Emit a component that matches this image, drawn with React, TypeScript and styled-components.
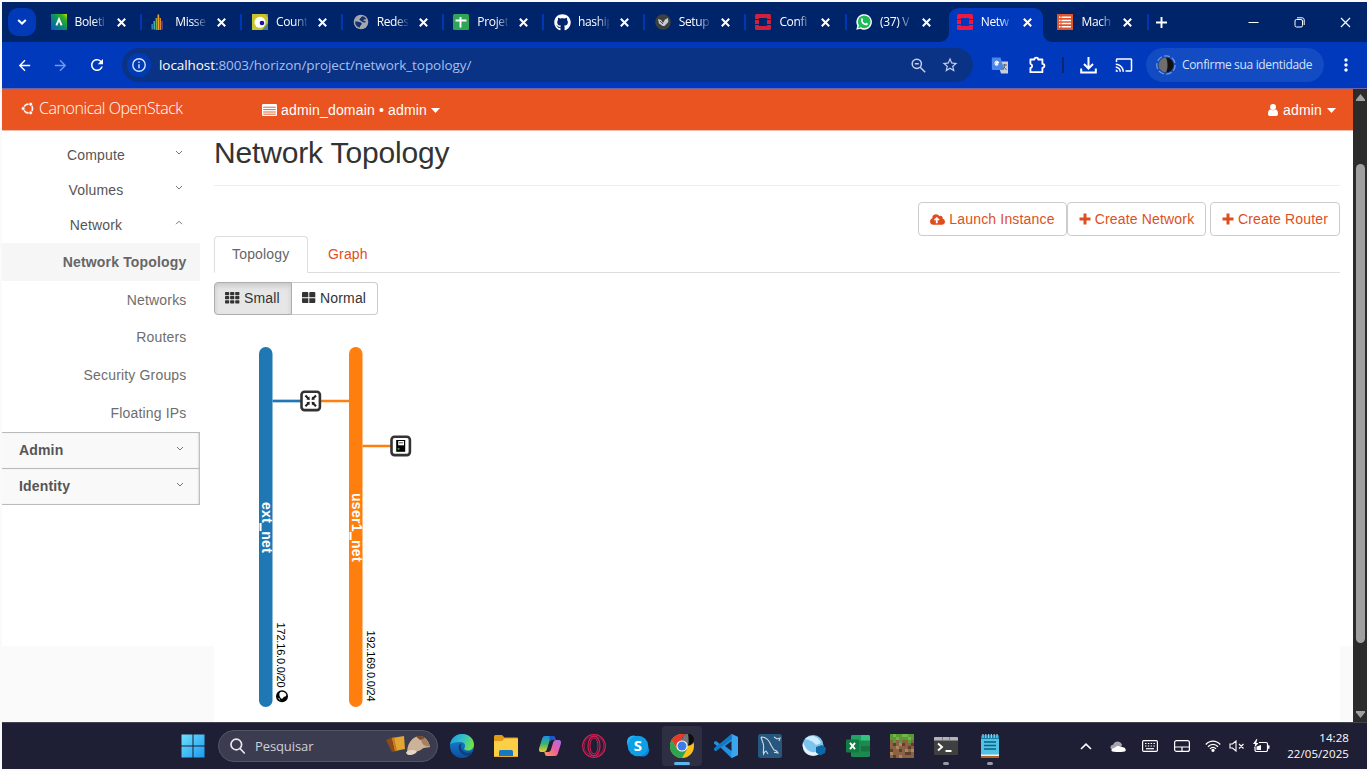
import React from "react";
import styled, { createGlobalStyle, css } from "styled-components";
import { FaCloudUploadAlt, FaGithub } from "react-icons/fa";
import { MdArrowBack, MdArrowForward, MdRefresh, MdCast, MdMoreVert, MdStarOutline } from "react-icons/md";

const ui = `"Open Sans", "Noto Sans", sans-serif`;
const arial = `"Liberation Sans", Arial, sans-serif`;

const GlobalStyle = createGlobalStyle`
  * { box-sizing: border-box; }
  html, body { margin: 0; padding: 0; background: #fafafc; }
  body { width: 1369px; height: 771px; overflow: hidden; }
  svg { display: block; flex: none; }
`;

const Screen = styled.div`
  width: 1365px;
  height: 767px;
  margin: 2px;
  display: flex;
  flex-direction: column;
  background: #fff;
  overflow: hidden;
`;

/* ---------- browser chrome ---------- */
const TabStrip = styled.div`
  height: 40px;
  background: #002469;
  display: flex;
  align-items: center;
  padding-left: 6px;
`;
const TabSearch = styled.div`
  width: 28px;
  height: 28px;
  border-radius: 10px;
  background: #003ab9;
  display: grid;
  place-items: center;
  margin-right: 6.6px;
`;
const Tab = styled.div<{ $line?: boolean }>`
  position: relative;
  width: 100.7px;
  height: 40px;
  flex: none;
  display: flex;
  align-items: center;
  padding-left: 8px;
  ${(p) => p.$line && css`
    &::after {
      content: "";
      position: absolute;
      right: 1.6px;
      top: 12px;
      width: 2px;
      height: 16px;
      background: #0038b4;
    }
  `}
`;
const ActiveShape = styled.svg`
  position: absolute;
  left: -10px;
  top: 6px;
`;
const TabIcon = styled.div`
  position: relative;
  width: 16px;
  height: 16px;
  margin-right: 8px;
`;
const TabTitle = styled.span`
  position: relative;
  width: 31px;
  margin-right: 11px;
  white-space: nowrap;
  font: 400 12px/18px ${ui};
  letter-spacing: -0.35px;
  color: #fff;
  mask-image: linear-gradient(90deg, #000 60%, transparent 105%);
`;
const TabClose = styled.div`
  position: relative;
`;
const NewTab = styled.div`
  margin-left: 6px;
  flex: 1;
`;
const WindowButtons = styled.div`
  display: flex;
  gap: 35px;
  padding-right: 16px;
`;
const Toolbar = styled.div`
  height: 46px;
  background: #0039bb;
  display: flex;
  align-items: center;
  padding-left: 14px;
  color: #fff;
`;
const NavIcons = styled.div`
  display: flex;
  align-items: center;
  gap: 19px;
  width: 106px;
`;
const Omnibox = styled.div`
  width: 851px;
  height: 34px;
  border-radius: 17px;
  background: #0b3385;
  display: flex;
  align-items: center;
  padding-left: 5px;
`;
const InfoBadge = styled.div`
  width: 24px;
  height: 24px;
  border-radius: 50%;
  background: #003bb4;
  display: grid;
  place-items: center;
  margin-right: 8px;
`;
const Url = styled.div`
  flex: 1;
  font: 400 13.5px/20px ${ui};
  letter-spacing: -0.07px;
  color: #a5bfee;
  b { font-weight: 400; color: #fff; }
`;
const OmniIcons = styled.div`
  display: flex;
  align-items: center;
  gap: 15px;
  padding-right: 14px;
  color: #c3d0ea;
`;
const Extensions = styled.div`
  display: flex;
  align-items: center;
  width: 173px;
  padding-left: 18px;
`;
const ToolDivider = styled.div`
  width: 2px;
  height: 16px;
  margin: 0 16px 0 16px;
  background: #0a2470;
`;
const Profile = styled.div`
  width: 178px;
  height: 34px;
  border-radius: 17px;
  background: #124bc2;
  display: flex;
  align-items: center;
  gap: 6px;
  padding-left: 10px;
  margin-right: 12px;
  font: 400 12px/18px ${ui};
  letter-spacing: -0.33px;
  white-space: nowrap;
  color: #d6e2fc;
`;

/* ---------- page ---------- */
const Viewport = styled.div`
  height: 634px;
  display: flex;
  border-top: 1px solid #6d63a5;
`;
const Page = styled.div`
  width: 1351px;
  font: 400 14px/20px ${arial};
  letter-spacing: 0.17px;
  color: #333;
`;
const Header = styled.div`
  height: 42px;
  background: #e95420;
  border-bottom: 1px solid #f0bcab;
  display: flex;
  align-items: center;
  color: #fff;
`;
const Brand = styled.div`
  display: flex;
  align-items: center;
  gap: 4px;
  width: 260px;
  padding: 0 0 3px 19px;
  font: 300 16px/22px ${ui};
  letter-spacing: -0.44px;
  white-space: nowrap;
`;
const HeaderMenu = styled.div<{ $grow?: boolean }>`
  display: flex;
  align-items: center;
  gap: ${(p) => (p.$grow ? 4 : 5)}px;
  flex: ${(p) => (p.$grow ? 1 : "none")};
  padding-right: ${(p) => (p.$grow ? 0 : 17)}px;
  padding-top: 1px;
`;
const Body = styled.div`
  display: flex;
  height: 591px;
  background: linear-gradient(#fff 515px, #fafafa 515px);
`;
const Sidebar = styled.div`
  width: 198px;
  margin-right: 14px;
  padding-top: 7px;
`;
const GroupRow = styled.div`
  height: 35px;
  display: flex;
  align-items: center;
  padding-bottom: 2px;
  color: #555;
  span { width: 173px; text-align: center; padding-left: 15px; }
  svg { margin-top: -3px; }
`;
const LinkRow = styled.div<{ $active?: boolean }>`
  height: 37.8px;
  display: flex;
  align-items: center;
  justify-content: flex-end;
  padding-right: 13.5px;
  color: ${(p) => (p.$active ? "#666" : "#6e6e6e")};
  font-weight: ${(p) => (p.$active ? 700 : 400)};
  background: ${(p) => (p.$active ? "#f6f6f6" : "transparent")};
`;
const PanelRow = styled.div`
  height: 36px;
  display: flex;
  align-items: center;
  justify-content: space-between;
  padding: 0 16.500px 1px 17px;
  font-weight: 700;
  color: #555;
  background: #f9f9f9;
  border-top: 1px solid #bbb;
  box-shadow: inset -2px 0 2px -1px #aaa;
  svg { margin-top: -2px; }
  &:last-child { height: 37px; border-bottom: 1px solid #bbb; }
`;
const Main = styled.div`
  width: 1126px;
  background: #fff;
`;
const Title = styled.h1`
  margin: 0;
  height: 55px;
  padding-top: 4px;
  border-bottom: 1px solid #eee;
  font: 400 30px/36px ${arial};
  letter-spacing: -0.16px;
  color: #333;
`;
const Actions = styled.div`
  display: flex;
  justify-content: flex-end;
  padding-top: 16px;
`;
const ActionButton = styled.div<{ $gap?: number; $w: number }>`
  width: ${(p) => p.$w}px;
  height: 34px;
  margin-left: ${(p) => p.$gap ?? 0}px;
  display: flex;
  align-items: center;
  justify-content: center;
  gap: 4px;
  border: 1px solid #ccc;
  border-radius: 4px;
  color: #dd4f22;
  white-space: nowrap;
`;
const Tabs = styled.div`
  display: flex;
  height: 37px;
  border-bottom: 1px solid #ddd;
`;
const PageTab = styled.div<{ $active?: boolean }>`
  height: 37px;
  padding: ${(p) => (p.$active ? 7 : 8)}px 19px 0 ${(p) => (p.$active ? 17 : 20)}px;
  width: ${(p) => (p.$active ? "94px" : "auto")};
  color: ${(p) => (p.$active ? "#666" : "#dd4f22")};
  ${(p) => p.$active && css`
    background: #fff;
    border: 1px solid #ddd;
    border-bottom-color: #fff;
    border-radius: 4px 4px 0 0;
  `}
`;
const SizeToggle = styled.div`
  display: flex;
  margin-top: 9px;
`;
const SizeButton = styled.div<{ $on?: boolean }>`
  width: ${(p) => (p.$on ? 78 : 86)}px;
  height: 33px;
  display: flex;
  align-items: center;
  padding: 0 0 1px 10px;
  gap: 4px;
  border: 1px solid ${(p) => (p.$on ? "#adadad" : "#ccc")};
  border-left-width: ${(p) => (p.$on ? 1 : 0)}px;
  border-radius: ${(p) => (p.$on ? "4px 0 0 4px" : "0 4px 4px 0")};
  background: ${(p) => (p.$on ? "#e6e6e6" : "#fff")};
  box-shadow: ${(p) => (p.$on ? "inset 0 3px 5px rgba(0,0,0,.125)" : "none")};
`;
const Canvas = styled.div`
  padding-top: 10px;
`;
const ScrollBar = styled.div`
  width: 14px;
  background: #2b2b2b;
  display: flex;
  flex-direction: column;
  align-items: center;
  padding: 5px 0 4px;
`;
const Thumb = styled.div`
  width: 9px;
  height: 479px;
  border-radius: 5px;
  background: #9f9f9f;
  margin: 63px 0 auto;
`;

/* ---------- taskbar ---------- */
const Taskbar = styled.div`
  height: 47px;
  background: #1e1e34;
  border-top: 1px solid #44444f;
  display: flex;
  align-items: center;
  padding-left: 179px;
  color: #fff;
`;
const SearchBox = styled.div`
  width: 220px;
  height: 32px;
  margin: 0 2px 0 13px;
  border-radius: 16px;
  border: 1px solid #55556a;
  background: #3c3c50;
  display: flex;
  align-items: center;
  padding: 0 4px 0 11px;
  gap: 10px;
  font: 400 13px/18px ${ui};
  letter-spacing: -0.1px;
  color: #d0d0d8;
  span { flex: 1; }
`;
const TaskItem = styled.div<{ $open?: boolean; $current?: boolean }>`
  position: relative;
  width: 40px;
  height: 40px;
  margin: 0 2px;
  border-radius: 4px;
  display: grid;
  place-items: center;
  background: ${(p) => (p.$current ? "#2f2f44" : "transparent")};
  ${(p) => (p.$open || p.$current) && css`
    &::after {
      content: "";
      position: absolute;
      bottom: 1px;
      left: ${p.$current ? 12 : 17}px;
      width: ${p.$current ? 16 : 6}px;
      height: 3px;
      border-radius: 2px;
      background: ${p.$current ? "#5bb5f0" : "#9a9aa6"};
    }
  `}
`;
const Tray = styled.div`
  flex: 1;
  display: flex;
  align-items: center;
  justify-content: flex-end;
  padding-right: 18px;
`;
const TrayIcon = styled.div<{ $w: number }>`
  width: ${(p) => p.$w}px;
  display: grid;
  place-items: center;
`;
const Clock = styled.div`
  width: 73px;
  text-align: right;
  font: 400 11.5px/16px ${ui};
  letter-spacing: 0.08px;
`;

/* ---------- icons ---------- */
const Cross = ({ s = 9, w = 2 }: { s?: number; w?: number }) => (
  <svg width={s} height={s} viewBox="0 0 9 9" stroke="#fff" strokeWidth={w}><path d="M.8.8l7.4 7.4M8.2.8L.8 8.2" /></svg>
);
const Chevron = ({ up }: { up?: boolean }) => (
  <svg width="8" height="6" viewBox="0 0 8 6" fill="none" stroke="#777" strokeWidth="1">
    <path d={up ? "M1 4.2l3-3 3 3" : "M1 1l3 3 3-3"} />
  </svg>
);
const Caret = () => <svg width="9" height="5" viewBox="0 0 9 5" fill="#fff"><path d="M0 0h9L4.500 5z" /></svg>;
const Plus = () => (
  <svg width="12" height="12" viewBox="0 0 12 12" stroke="#dd4f22" strokeWidth="3"><path d="M6 .5v11M.5 6h11" strokeLinecap="butt" /></svg>
);
const GridSmall = () => (
  <svg width="15" height="12" viewBox="0 0 15 12" fill="#333">
    {[0, 1, 2].map((r) => [0, 1, 2].map((c) => <rect key={`${r}${c}`} x={c * 5.1} y={r * 4.1} width="4.200" height="3.200" rx=".7" />))}
  </svg>
);
const GridLarge = () => (
  <svg width="14" height="12" viewBox="0 0 14 12" fill="#333">
    <path d="M1 0h4.300a1 1 0 0 1 1 1v4.300H0V1a1 1 0 0 1 1-1zM8.500 0h3.800a1 1 0 0 1 1 1v4.300H7.300V1a1 1 0 0 1 1-1zM0 6.300h6.300v4.800H1a1 1 0 0 1-1-1zM7.300 6.300h6v3.800a1 1 0 0 1-1 1h-5z" />
  </svg>
);

const OpenStackMark = ({ c }: { c: string }) => (
  <svg width="16" height="16" viewBox="0 0 16 16" fill={c}>
    <path d="M1.500 0h13A1.500 1.500 0 0 1 16 1.500V5h-4V4H4v1H0V1.500A1.500 1.500 0 0 1 1.500 0zM0 6h4v4H0zM12 6h4v4h-4zM0 11h4v1h8v-1h4v3.500a1.500 1.500 0 0 1-1.500 1.500h-13A1.500 1.500 0 0 1 0 14.500z" />
  </svg>
);

const favicons: React.ReactNode[] = [
  <svg width="16" height="16" viewBox="0 0 16 16">
    <defs><linearGradient id="bol" x1="0" y1="1" x2="1" y2="0"><stop offset="0" stopColor="#0b55c4" /><stop offset=".5" stopColor="#0b8f6a" /><stop offset=".8" stopColor="#35b31c" /><stop offset="1" stopColor="#d6e000" /></linearGradient></defs>
    <path fill="url(#bol)" d="M0 0h16v16H0z" /><path d="M5.400 11.300L8 5.200l2.600 6.100" fill="none" stroke="#fff" strokeWidth="1.900" />
  </svg>,
  <svg width="16" height="16" viewBox="0 0 16 16">
    <path fill="#3b87b8" d="M.5 10h1.400v5.500H.5z" /><path fill="#3fb3a0" d="M2.500 7h1.500v8.500H2.500z" /><path fill="#8fa844" d="M4.600 4h1.500v12H4.600z" /><path fill="#f0a024" d="M6.500.5h1.700V16H6.500z" /><path fill="#d98a3a" d="M8.600 4h1.400v12H8.600z" /><path fill="#a0507a" d="M10.400 7h1.200v8.500h-1.200z" />
  </svg>,
  <svg width="16" height="16" viewBox="0 0 16 16">
    <path fill="#c9c42c" d="M0 0h16v16H0z" /><path fill="#4f7fa8" d="M10 16h6V9z" /><path fill="#8f9c63" d="M13 0h3v4z" /><circle cx="8" cy="8.300" r="5.500" fill="#fff" /><circle cx="10" cy="9" r="2.300" fill="#14149c" />
  </svg>,
  <svg width="16" height="16" viewBox="0 0 16 16">
    <circle cx="8" cy="8" r="7.300" fill="#a3a8b0" /><path fill="#16306c" d="M2.200 7.600c2-.6 3.500.2 5 .6 1.300.3 2 1 1.300 2.200-.8 1-1.500 1.200-1.800 3.300C4 13 1.700 10.500 2.200 7.600zM9 2.200c1.500 0 3.500 1.200 4.300 3-1.300.3-2.300-.2-3 .8-.5.800 1.500 1 2.700 1.500-.6 1.200-1.500 1.300-2.800.7S7.700 7 6.700 6s1.300-2 2.300-3.800z" />
  </svg>,
  <svg width="16" height="16" viewBox="0 0 16 16">
    <rect width="16" height="16" rx="1.500" fill="#30a557" /><path d="M2.500 6.500h11M7.500 3v10.500" stroke="#fff" strokeWidth="1.900" />
  </svg>,
  <FaGithub size={17} color="#fff" />,
  <svg width="16" height="16" viewBox="0 0 16 16">
    <circle cx="8" cy="8" r="7.800" fill="#3d4040" /><path d="M3 5l3.200 1L8 9l2-3.500L13 4l.3 4L9.500 12H7.800L4 9.500z" fill="#c8ccd0" /><path d="M5 7l3 3" stroke="#555" fill="none" />
  </svg>,
  <OpenStackMark c="#d0203c" />,
  <svg width="16" height="16" viewBox="0 0 16 16">
    <path d="M.3 15.800l1-4A7.800 7.800 0 1 1 4.300 14.800z" fill="#fff" /><circle cx="8.200" cy="7.800" r="6.400" fill="#20b858" /><path d="M2 14.200l.9-3 2 2z" fill="#20b858" /><path d="M5.600 4.300c.8-.8 1.300.9 1.500 1.500s-.7.800-.5 1.200c.5 1.200 1.400 2 2.500 2.400.5.200.8-1 1.300-.7.600.2 2 .8 1.400 1.700-.8 1.300-2.400 1.200-4.200.2S4.200 7 5.600 4.300z" fill="#fff" />
  </svg>,
  <OpenStackMark c="#f01840" />,
  <svg width="16" height="16" viewBox="0 0 16 16">
    <path fill="#e0542c" d="M0 0h16v16H0z" /><path d="M2 3.200h1.500M4.500 3.200H14M2 6.400h1.500M4.500 6.400H14M2 9.600h1.500M4.500 9.600H14M2 12.800h1.500M4.500 12.800H14" stroke="#fff" strokeWidth="1.500" />
  </svg>,
];
const tabTitles = ["Boleti", "Misse", "Count", "Redes", "Projet", "haship", "Setup", "Confi", "(37) V", "Netw", "Mach"];

const apps: { icon: React.ReactNode; open?: boolean; current?: boolean }[] = [
  { icon: <svg width="24" height="24" viewBox="0 0 24 24">
      <defs>
        <linearGradient id="e1" x1="0" y1="0" x2="1" y2="0.300"><stop offset="0" stopColor="#1b9de2" /><stop offset=".6" stopColor="#35c1c7" /><stop offset="1" stopColor="#6bdf4c" /></linearGradient>
        <linearGradient id="e2" x1="0" y1="0" x2="0" y2="1"><stop offset="0" stopColor="#1b8ad8" /><stop offset="1" stopColor="#0b4fa0" /></linearGradient>
      </defs>
      <circle cx="12" cy="12" r="12" fill="url(#e2)" />
      <path d="M0 11C1 4 6 0 12 0c7 0 12 5 12 10.500 0 4-3 6-6 6-3 0-4.500-1-3.500-2.500 1.500-2.500 0-6-4-6C5 8 1 9 0 11z" fill="url(#e1)" />
      <path d="M11 12c0 4 3 7 7 7 2 0 3.500-.6 4.600-1.200-.4 1.200-2 3.200-4 4.200-6 0-10-4.500-10-8.500C8.600 11 10 9.500 12 9.300c-.6.700-1 1.600-1 2.700z" fill="#123f7c" />
    </svg> },
  { icon: <svg width="24" height="22" viewBox="0 0 24 22">
      <path d="M0 1.500A1.500 1.500 0 0 1 1.500 0H8l2.500 2.500H23a1 1 0 0 1 1 1V21H0z" fill="#e09a1a" /><path d="M0 6h8l2.500-2.500H24V21H0z" fill="#fccf46" /><path d="M5 21v-4.500A1.500 1.500 0 0 1 6.500 15h11a1.500 1.500 0 0 1 1.500 1.500V21z" fill="#1678bf" /><path d="M0 21h24v1H0z" fill="#e8a82c" />
    </svg> },
  { icon: <svg width="24" height="22" viewBox="0 0 24 22">
      <defs>
        <linearGradient id="c1" x1="0" y1="0" x2="0" y2="1"><stop offset="0" stopColor="#1b8fe8" /><stop offset=".5" stopColor="#3bb56d" /><stop offset="1" stopColor="#f4cb2b" /></linearGradient>
        <linearGradient id="c2" x1="1" y1="0" x2="0" y2="1"><stop offset="0" stopColor="#a66bf0" /><stop offset=".5" stopColor="#ee5f9b" /><stop offset="1" stopColor="#ff9d4d" /></linearGradient>
      </defs>
      <path d="M7 1h8c2 0 2 2 2.700 4H14c-2 0-2.500 1-3 2.500L9 14c-.6 2-1.500 3-3 3H3.500C1 17 .6 15 1.200 13L4 4c.6-2 1.400-3 3-3z" fill="url(#c1)" />
      <path d="M17 21H9c-2 0-2-2-2.700-4H10c2 0 2.500-1 3-2.500L15 8c.6-2 1.500-3 3-3h2.500c2.500 0 2.900 2 2.300 4L20 18c-.6 2-1.400 3-3 3z" fill="url(#c2)" />
      <path d="M11.500 1H15c2 0 2 2 2.700 4H14c-1.500 0-2.300.6-2.700 1.500z" fill="#1e56c8" />
    </svg> },
  { icon: <svg width="24" height="24" viewBox="0 0 24 24" fill="none" stroke="#d81f52"><circle cx="12" cy="12" r="11.300" strokeWidth="1.200" /><circle cx="12" cy="12" r="9.800" strokeWidth=".6" /><ellipse cx="12" cy="12" rx="6" ry="9.800" strokeWidth="1.200" /><ellipse cx="12" cy="12" rx="4" ry="8" strokeWidth="1" /></svg> },
  { icon: <svg width="24" height="24" viewBox="0 0 24 24"><circle cx="7.500" cy="8" r="6.600" fill="#26b4f2" /><circle cx="16.500" cy="16" r="6.600" fill="#0a86d8" /><circle cx="12" cy="12" r="10.300" fill="#0f9fe6" /><text x="12" y="17.300" textAnchor="middle" fontFamily="Open Sans" fontWeight="700" fontSize="15" fill="#fff">S</text></svg> },
  { current: true, icon: <svg width="24" height="24" viewBox="0 0 24 24">
      <circle cx="12" cy="12" r="12" fill="#fbc116" /><path d="M1.600 6A12 12 0 0 1 22.400 6H12L7 15z" fill="#e33b2e" /><path d="M1.600 6A12 12 0 0 0 12 24l5.200-9L12 17 7 15z" fill="#2da44e" /><circle cx="18" cy="5.800" r="6" fill="#0f0f0f" /><path d="M18-.2a6 6 0 0 0 0 12c1.200-4 .5-8 0-12z" fill="#777" /><circle cx="12" cy="12" r="5.600" fill="#fff" /><circle cx="12" cy="12" r="4.500" fill="#3b7de8" />
    </svg> },
  { icon: <svg width="24" height="24" viewBox="0 0 24 24"><path d="M17.500 0L24 3v18l-6.500 3L6.500 13.500 2 17 0 16v-1.500L3 12 0 9.500V8l2-1 4.500 3.500zM18 6.800L11 12l7 5.200z" fill="#2490df" fillRule="evenodd" /><path d="M17.500 0L24 3v18l-6.500 3z" fill="#3aa6ee" /><path d="M17.500 0L0 14.500V16l2 1L18 5z" fill="#1278c0" /></svg> },
  { icon: <svg width="24" height="24" viewBox="0 0 24 24"><rect width="24" height="24" rx="2.500" fill="#27567e" /><path d="M3 3c4 0 7 2 9 6 1 3 3 5 4 7 2 0 3 1 4 3-2-.5-3-1-4-.5M3 3c1 4 2 5 2.500 8 .5 3-.5 6 0 9 1-2 1.500-3 2.500-3l2 3M16 3l3 2 3-1-1 3" fill="none" stroke="#cfdce6" strokeWidth="1.100" /></svg> },
  { icon: <svg width="24" height="24" viewBox="0 0 24 24"><circle cx="11" cy="11.500" r="10.500" fill="#7cc4f0" /><path d="M1 8c3 9 8 11.500 14 9.500l2 2.500C11 24.500-1.500 20 1 8z" fill="#e4f3fb" /><path d="M3 5c5-5 13-4 16 4l-5 2C11 7 7 6 3 5z" fill="#cfeafa" /><path d="M14 13l6-2 4 3-1 5-5 2.500-4-3z" fill="#0f67a8" /></svg> },
  { icon: <svg width="24" height="22" viewBox="0 0 24 22"><rect x="5" width="19" height="22" rx="1.500" fill="#1c8a50" /><path d="M5 1.500A1.500 1.500 0 0 1 6.500 0H15v5.500H5z" fill="#21a366" /><path d="M15 0h7.500A1.500 1.500 0 0 1 24 1.500v4h-9z" fill="#33c481" /><path d="M15 11h9v5.500h-9z" fill="#17723f" /><rect y="4.500" width="13" height="13" rx="1" fill="#107c41" /><path d="M4 7.800l5 6.400M9 7.800l-5 6.400" stroke="#fff" strokeWidth="1.900" /></svg> },
  { icon: <svg width="24" height="24" viewBox="0 0 8 8" shapeRendering="crispEdges">
      <path fill="#8a6244" d="M0 0h8v8H0z" /><path fill="#5a9a35" d="M0 0h8v2H7v1H6V2H4v1H3V2H2v1H1V2H0z" /><path fill="#74b447" d="M1 0h1v1H1zM4 0h2v1H4zM6 1h1v1H6zM2 1h1v1H2z" /><path fill="#5f3f2b" d="M1 3h1v1H1zM4 3h1v1H4zM7 3h1v1H7zM0 5h1v1H0zM3 5h1v1H3zM5 6h2v1H5zM1 7h1v1H1zM6 4h1v1H6z" /><path fill="#b08462" d="M2 4h1v1H2zM5 5h1v1H5zM0 6h1v1H0zM7 5h1v1H7zM3 7h1v1H3zM3 3h1v1H3z" />
    </svg> },
  { open: true, icon: <svg width="24" height="18" viewBox="0 0 24 18"><rect width="24" height="18" rx="1" fill="#404040" /><path d="M0 1a1 1 0 0 1 1-1h22a1 1 0 0 1 1 1v2.500H0z" fill="#b4b4b8" /><path d="M8 0h1v3.500H8zM15 0h1v3.500h-1z" fill="#808084" /><path d="M4 6.500l4 3.500-4 3.500M11.500 14h6" fill="none" stroke="#fff" strokeWidth="1.900" /></svg> },
  { open: true, icon: <svg width="18" height="24" viewBox="0 0 18 24"><path d="M0 21h18v3H0z" fill="#b4622a" /><path d="M0 19h18v3H0z" fill="#f1efe8" /><rect y="1.500" width="18" height="19" rx="1" fill="#4fc3e6" /><path d="M0 2h18v3H0z" fill="#1c7fa6" /><path d="M2 0v4M4.800 0v4M7.600 0v4M10.400 0v4M13.200 0v4M16 0v4" stroke="#7fd8f0" strokeWidth="1.200" /><path d="M3 8h12M3 11.500h12M3 15h12" stroke="#0f5e80" strokeWidth="1.600" /></svg> },
];

const Topology = () => (
  <svg width="220" height="395" viewBox="214 325 220 395" fontFamily="Liberation Sans, Arial, sans-serif">
    <rect x="259" y="347" width="13.500" height="360" rx="6.700" fill="#1f77b4" />
    <rect x="349" y="347" width="13.500" height="360" rx="6.700" fill="#ff7f0e" />
    <path d="M272.500 401H302" stroke="#1f77b4" strokeWidth="2.700" />
    <path d="M320 401h29M362.500 446H392" stroke="#ff7f0e" strokeWidth="2.700" />
    <g fill="#fff" stroke="#333" strokeWidth="2.600">
      <rect x="301.500" y="391.700" width="18.400" height="18.400" rx="3" />
      <rect x="391.500" y="436.700" width="18.400" height="18.400" rx="3" />
    </g>
    {/* four arrows pointing at the middle of the router box */}
    {[0, 90, 180, 270].map((a) => (
      <g key={a} transform={`translate(310.700 400.900) rotate(${a})`}>
        <path d="M-5.300-5.300l3 3" stroke="#222" strokeWidth="2.100" />
        <path d="M-.9-.9L-4.300-1.300-1.300-4.300z" fill="#222" />
      </g>
    ))}
    <rect x="396.200" y="440" width="9" height="11.800" fill="#000" />
    <path d="M398.200 441h5.800v4.300h-5.800z" fill="#fff" /><path d="M399 442.800h4.200" stroke="#333" strokeWidth=".9" /><circle cx="398.600" cy="448.800" r="1.100" fill="#2f9a3c" />
    <g fill="#fff" fontSize="14" fontWeight="700" letterSpacing=".3">
      <text transform="translate(262.300 502) rotate(90)">ext_net</text>
      <text transform="translate(352.300 493) rotate(90)">user1_net</text>
    </g>
    <path d="M260.500 523v8M350.500 532v8" stroke="#fff" strokeWidth="2" />
    <g fill="#000" fontSize="11" letterSpacing="-.18">
      <text transform="translate(277 622.500) rotate(90)">172.16.0.0/20</text>
      <text transform="translate(367 630.500) rotate(90)">192.169.0.0/24</text>
    </g>
    <circle cx="282" cy="696.200" r="6" fill="#000" /><path d="M280.500 692c1.800-.8 4.800-.3 5.800 2.500.3 1.500-1 2.200-2 2.200s-1 1.700-2.300 2-1.600-1.200-2.200-2.200-.9-3.600.7-4.500zM277.500 697.500l2 1 1 2.300z" fill="#fff" />
  </svg>
);

export default function App() {
  return (
    <>
      <GlobalStyle />
      <Screen>
        <TabStrip>
          <TabSearch>
            <svg width="10" height="6" viewBox="0 0 10 6" fill="none" stroke="#fff" strokeWidth="2"><path d="M1.200 1L5 4.600 8.800 1" /></svg>
          </TabSearch>
          {tabTitles.map((t, i) => (
            <Tab key={t} $line={i < 8 || i === 10}>
              {i === 9 && (
                <ActiveShape width="114" height="34" viewBox="0 0 114 34" fill="#0039bb">
                  <path d="M0 34c6 0 10-4 10-10V10C10 4 14 0 20 0h74c6 0 10 4 10 10v14c0 6 4 10 10 10z" />
                </ActiveShape>
              )}
              <TabIcon>{favicons[i]}</TabIcon>
              <TabTitle>{t}</TabTitle>
              <TabClose><Cross /></TabClose>
            </Tab>
          ))}
          <NewTab><svg width="11" height="11" viewBox="0 0 11 11" stroke="#fff" strokeWidth="1.900"><path d="M5.500 0v11M0 5.500h11" /></svg></NewTab>
          <WindowButtons>
            <svg width="11" height="11" viewBox="0 0 11 11" stroke="#fff"><path d="M.5 5.500h10" /></svg>
            <svg width="11" height="11" viewBox="0 0 11 11" stroke="#fff" fill="none"><rect x="1" y="2.500" width="7.500" height="7.500" rx="1.500" /><path d="M3 .8h5c1.300 0 2.200.9 2.200 2.200v5" /></svg>
            <Cross s={11} w={0.95} />
          </WindowButtons>
        </TabStrip>
        <Toolbar>
          <NavIcons>
            <MdArrowBack size={17} />
            <MdArrowForward size={17} color="#6f9af0" />
            <MdRefresh size={18} />
          </NavIcons>
          <Omnibox>
            <InfoBadge>
              <svg width="14" height="14" viewBox="0 0 14 14" fill="none" stroke="#d9e4fb" strokeWidth="1.400"><circle cx="7" cy="7" r="6.200" /><path d="M7 6.200v4M7 3.500v1.400" /></svg>
            </InfoBadge>
            <Url><b>localhost</b>:8003/horizon/project/network_topology/</Url>
            <OmniIcons>
              <svg width="15" height="15" viewBox="0 0 15 15" fill="none" stroke="currentColor" strokeWidth="1.500"><circle cx="5.800" cy="5.800" r="4.600" /><path d="M3.800 5.800h4M9.200 9.200l5 5" /></svg>
              <MdStarOutline size={18} />
            </OmniIcons>
          </Omnibox>
          <Extensions>
            <svg width="18" height="17" viewBox="0 0 18 17"><path d="M6 4.500h11v12H10z" fill="#c9cdd6" /><path d="M.8.500h8.700L13 13H2a1.200 1.200 0 0 1-1.200-1.200z" fill="#4d86ea" /><path d="M8 5.500H5.500V6.700H7C6.700 8.800 4 8.500 4 6.300S6.300 3.800 7.200 4.800" fill="none" stroke="#fff" strokeWidth="1.100" /><path d="M11.500 8h4.500M13.700 7v1c0 2-1 3-2 4M12.500 9.500l3 3.500" stroke="#5a6070" fill="none" /></svg>
            <svg style={{ marginLeft: 20 }} width="17" height="18" viewBox="0 0 17 18" fill="none" stroke="#fff" strokeWidth="1.800"><path d="M1.400 3.500h4c0-2.600 3.800-2.600 3.800 0h4.200v4.400c2.700 0 2.700 3.900 0 3.900v4.400H1.400v-4.200c2.300-.4 2.300-3.800 0-4.200z" strokeLinejoin="round" /></svg>
            <ToolDivider />
            <svg width="17" height="17" viewBox="0 0 17 17" fill="none" stroke="#fff" strokeWidth="2"><path d="M8.500 0v11M4 7l4.500 4.500L13 7M1.200 11.500v4h14.600v-4" /></svg>
            <MdCast size={18} style={{ marginLeft: 18 }} />
          </Extensions>
          <Profile>
            <svg width="20" height="20" viewBox="0 0 20 20"><circle cx="10" cy="10" r="9.200" fill="none" stroke="#6e97ea" strokeWidth="1.300" strokeDasharray="6 2.200" /><circle cx="10" cy="10" r="7.600" fill="#111" /><path d="M10 2.400a7.600 7.600 0 0 0 0 15.200c2-4 2-11 0-15.200z" fill="#6e6e6e" /></svg>
            Confirme sua identidade
          </Profile>
          <MdMoreVert size={20} />
        </Toolbar>
        <Viewport>
          <Page>
            <Header>
              <Brand>
                <svg width="14" height="13" viewBox="0 0 14 13" fill="none"><circle cx="7.200" cy="6.500" r="4.300" stroke="#fff" strokeWidth="1.700" /><g fill="#fff" stroke="#e95420" strokeWidth=".8"><circle cx="2.200" cy="6.500" r="1.900" /><circle cx="9.700" cy="2.200" r="1.900" /><circle cx="9.700" cy="10.800" r="1.900" /></g></svg>
                Canonical OpenStack
              </Brand>
              <HeaderMenu $grow>
                <svg width="15" height="12" viewBox="0 0 15 12"><rect width="15" height="12" rx="1.200" fill="#fff" /><path d="M1.200 3.200h12.600M1.200 5.600h12.600M1.200 8h12.600M1.200 10.200h12.600" stroke="#e95420" strokeWidth=".9" /></svg>
                admin_domain • admin
                <Caret />
              </HeaderMenu>
              <HeaderMenu>
                <svg width="10" height="12" viewBox="0 0 10 12" fill="#fff"><circle cx="5" cy="3" r="3" /><path d="M0 10c0-3 1-4.600 2.300-4.600 1.500 1 3.900 1 5.400 0C9 5.400 10 7 10 10c0 1.200-.8 2-1.800 2H1.800C.8 12 0 11.200 0 10z" /></svg>
                admin
                <Caret />
              </HeaderMenu>
            </Header>
            <Body>
              <Sidebar>
                <GroupRow><span>Compute</span><Chevron /></GroupRow>
                <GroupRow><span>Volumes</span><Chevron /></GroupRow>
                <GroupRow><span>Network</span><Chevron up /></GroupRow>
                <LinkRow $active>Network Topology</LinkRow>
                <LinkRow>Networks</LinkRow>
                <LinkRow>Routers</LinkRow>
                <LinkRow>Security Groups</LinkRow>
                <LinkRow>Floating IPs</LinkRow>
                <PanelRow>Admin<Chevron /></PanelRow>
                <PanelRow>Identity<Chevron /></PanelRow>
              </Sidebar>
              <Main>
                <Title>Network Topology</Title>
                <Actions>
                  <ActionButton $w={149}><FaCloudUploadAlt size={15} />Launch Instance</ActionButton>
                  <ActionButton $w={139}><Plus />Create Network</ActionButton>
                  <ActionButton $w={130} $gap={4}><Plus />Create Router</ActionButton>
                </Actions>
                <Tabs>
                  <PageTab $active>Topology</PageTab>
                  <PageTab>Graph</PageTab>
                </Tabs>
                <SizeToggle>
                  <SizeButton $on><GridSmall />Small</SizeButton>
                  <SizeButton><GridLarge />Normal</SizeButton>
                </SizeToggle>
                <Canvas><Topology /></Canvas>
              </Main>
            </Body>
          </Page>
          <ScrollBar>
            <svg width="9" height="7" viewBox="0 0 9 7" fill="#9f9f9f"><path d="M4.500 0L9 5.500V7H0V5.500z" /></svg>
            <Thumb />
            <svg width="9" height="7" viewBox="0 0 9 7" fill="#9f9f9f"><path d="M4.500 7L0 1.500V0h9v1.500z" /></svg>
          </ScrollBar>
        </Viewport>
        <Taskbar>
          <svg width="24" height="24" viewBox="0 0 24 24"><defs><linearGradient id="w" x1="0" y1="0" x2="1" y2="1"><stop offset="0" stopColor="#6fe0fc" /><stop offset="1" stopColor="#1a9af0" /></linearGradient></defs><path d="M.5.500h11v11H.5zM12.500.500h11v11h-11zM.5 12.500h11v11H.5zM12.500 12.500h11v11h-11z" fill="url(#w)" /></svg>
          <SearchBox>
            <svg width="15" height="16" viewBox="0 0 15 16" fill="none" stroke="#e8e8ee" strokeWidth="1.700"><circle cx="6.300" cy="6.500" r="5.300" /><path d="M10 10.500l4.300 4.500" strokeLinecap="round" /></svg>
            <span>Pesquisar</span>
            <svg width="47" height="22" viewBox="0 0 47 22"><path d="M0 5l7-3 5 14-6 1z" fill="#8a4a1c" /><path d="M6 3l12-2 1 13-10 2z" fill="#e3a532" /><path d="M6 3l3 13 2-.4L8 2.600z" fill="#c47c1e" /><path d="M21 18c0-8 4-16 12-17 7 0 10 6 11 11-3 1-6 0-8 2s-5 2-7 3-6 3-8 1z" fill="#cdb29a" /><path d="M34 2c5 0 8 4 10 9-3 1-6 0-8-3z" fill="#a8805f" /><path d="M30 1.500c2-1.500 6-1 9 1.500l-5 2z" fill="#7a4a2c" /><path d="M20 17.500c3-3 8-3 11-1-2 4-10 5-11 1z" fill="#e6d6c6" /></svg>
          </SearchBox>
          {apps.map((a, i) => (
            <TaskItem key={i} $open={a.open} $current={a.current}>{a.icon}</TaskItem>
          ))}
          <Tray>
            <TrayIcon $w={32}><svg width="12" height="7" viewBox="0 0 12 7" fill="none" stroke="#fff" strokeWidth="1.600"><path d="M1 6l5-4.800L11 6" /></svg></TrayIcon>
            <TrayIcon $w={32}><svg width="16" height="11" viewBox="0 0 16 11"><path d="M2 8.500C-.5 7.500 0 4 3.300 3.500 4.500-.3 10-1 12 3.500l-1 4z" fill="#a4a4b0" /><path d="M1.500 10C1 8 3 7 5 6.500 6.500 4.800 9 4.500 10.500 6c3.500-.5 6 1.500 5 4-1 1.300-13 1.300-14 0z" fill="#fff" /></svg></TrayIcon>
            <TrayIcon $w={32}><svg width="16" height="12" viewBox="0 0 16 12" fill="none" stroke="#fff" strokeWidth="1.200"><rect x=".6" y=".6" width="14.800" height="10.800" rx="1.200" /><path d="M3 3.500h10M3 6h10" strokeDasharray="1.500 1.300" /><path d="M4 8.700h8" /></svg></TrayIcon>
            <TrayIcon $w={32}><svg width="16" height="12" viewBox="0 0 16 12" fill="none" stroke="#fff" strokeWidth="1.200"><rect x=".6" y=".6" width="14.800" height="10.800" rx="2" /><path d="M.6 7h14.800M8 7v4.500" /></svg></TrayIcon>
            <TrayIcon $w={30}><svg width="16" height="12" viewBox="0 0 16 12" fill="none" stroke="#fff" strokeWidth="1.300"><path d="M.8 4.500c4-4.600 10.400-4.600 14.400 0M3 6.700c2.800-3.200 7.200-3.200 10 0M5 8.900c1.700-2 4.300-2 6 0" /><circle cx="8" cy="10.300" r="1" fill="#fff" /></svg></TrayIcon>
            <TrayIcon $w={18}><svg width="16" height="12" viewBox="0 0 16 12" fill="none" stroke="#fff" strokeWidth="1.100"><path d="M1 4h2.500L7 1v10L3.500 8H1zM10 4l4.500 4.500M14.500 4L10 8.500" /></svg></TrayIcon>
            <TrayIcon $w={30}><svg width="17" height="14" viewBox="0 0 17 14" fill="none" stroke="#fff" strokeWidth="1.200"><path d="M6 3.500h7a1.500 1.500 0 0 1 1.500 1.500v6a1.500 1.500 0 0 1-1.500 1.500H3.500A1.500 1.500 0 0 1 2 11V8" /><path d="M15.700 6.300v3.400" strokeWidth="1.600" /><path d="M3.500 7.500L8 6v5H3.500z" fill="#fff" stroke="none" /><path d="M3.500 0L0 5h2.200L1.500 8.500 5.500 4H3.300L4.300 0z" fill="#fff" stroke="none" /></svg></TrayIcon>
            <Clock>14:28<br />22/05/2025</Clock>
          </Tray>
        </Taskbar>
      </Screen>
    </>
  );
}
